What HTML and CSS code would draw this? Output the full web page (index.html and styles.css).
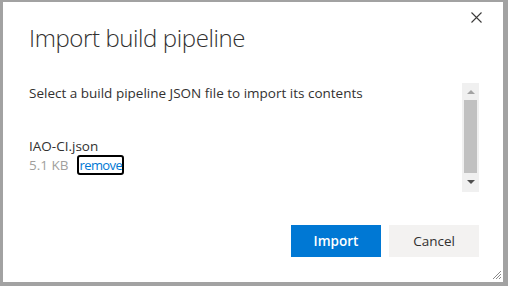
FILE: index.html
```html
<!DOCTYPE html>
<html lang="en">
<head>
<meta charset="utf-8">
<title>Import build pipeline</title>
<link rel="stylesheet" href="styles.css">
</head>
<body>
<div class="dialog">
  <button class="close" aria-label="Close">
    <svg width="11" height="11" viewBox="0 0 11 11"><path d="M0.5 0.5 L10.5 10.5 M10.5 0.5 L0.5 10.5" stroke="#3b3a39" stroke-width="1.1" fill="none"/></svg>
  </button>
  <h1 class="title">Import build pipeline</h1>
  <div class="body-row">
    <div class="content">
      <p class="intro">Select a build pipeline JSON file to import its contents</p>
      <div class="file">
        <div class="file-name">IAO-CI.json</div>
        <div class="file-meta"><span class="size">5.1 KB</span><a class="remove" href="#">remove</a></div>
      </div>
    </div>
    <div class="scrollbar">
      <span class="arrow up"></span>
      <span class="thumb"></span>
      <span class="arrow down"></span>
    </div>
  </div>
  <div class="footer">
    <button class="btn primary">Import</button>
    <button class="btn secondary">Cancel</button>
  </div>
  <svg class="grip" width="10" height="10" viewBox="0 0 10 10">
    <path d="M9 1 L1 9 M9 4 L4 9 M9 7 L7 9" stroke="#8a8a8a" stroke-width="1" fill="none"/>
  </svg>
</div>
</body>
</html>
```

FILE: styles.css
```css
html, body {
  margin: 0;
  padding: 0;
}
body {
  width: 508px;
  height: 286px;
  box-sizing: border-box;
  padding: 2px 5px 4px 3px;
  background: #a2a2a2;
  font-family: "Open Sans", "Noto Sans", sans-serif;
  color: #323130;
}
.dialog {
  position: relative;
  box-sizing: border-box;
  width: 500px;
  height: 280px;
  background: #ffffff;
  display: flex;
  flex-direction: column;
  padding: 0 24px 25px 26px;
}
.close {
  position: absolute;
  top: 10px;
  right: 21px;
  width: 11px;
  height: 11px;
  padding: 0;
  border: 0;
  background: none;
  display: flex;
}
.title {
  margin: 20px 0 0 0;
  font-size: 24px;
  font-weight: 300;
  line-height: 32px;
  height: 32px;
  letter-spacing: -0.4px;
  color: #323130;
}
.body-row {
  margin-top: 29px;
  height: 109px;
  display: flex;
}
.content {
  flex: 1;
}
.intro {
  margin: 0;
  font-size: 13.5px;
  line-height: 20px;
}
.file {
  margin-top: 34px;
  font-size: 13.5px;
}
.file-name {
  line-height: 18px;
}
.file-meta {
  display: flex;
  align-items: center;
  gap: 9px;
  height: 20px;
}
.size {
  color: #a19f9d;
}
.remove {
  color: #0078d4;
  text-decoration: none;
  border: 2px solid #000;
  border-radius: 3px;
  padding: 0;
  line-height: 16px;
  height: 16px;
  letter-spacing: -0.6px;
  font-size: 13px;
}
.scrollbar {
  width: 17px;
  background: #f0f0f0;
  display: flex;
  flex-direction: column;
  align-items: center;
  padding: 7px 0 8px;
  box-sizing: border-box;
}
.arrow {
  width: 0;
  height: 0;
  border-left: 4px solid transparent;
  border-right: 4px solid transparent;
}
.arrow.up {
  border-bottom: 4px solid #a3a3a3;
}
.arrow.down {
  border-top: 4px solid #505050;
}
.thumb {
  width: 13px;
  flex: 1;
  background: #c1c1c1;
  margin: 6px 0 7px;
}
.footer {
  margin-top: auto;
  display: flex;
  justify-content: flex-end;
  gap: 8px;
}
.btn {
  width: 90px;
  height: 32px;
  border: 0;
  border-radius: 0;
  font-family: "Open Sans", "Noto Sans", sans-serif;
  font-size: 13.5px;
  font-weight: 600;
  padding: 0;
}
.primary {
  background: #0078d4;
  color: #ffffff;
}
.secondary {
  background: #f3f2f1;
  color: #323130;
  font-weight: 400;
}
.grip {
  position: absolute;
  right: 1px;
  bottom: 2px;
}
```
